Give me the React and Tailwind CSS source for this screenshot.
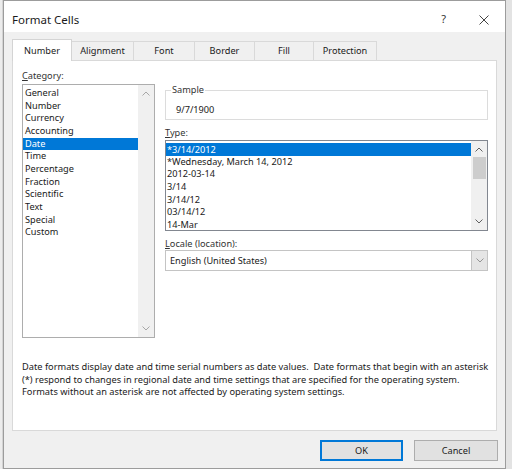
import React from "react";

const Chev = ({ up = false, className = "" }) => (
  <svg width="8" height="5" viewBox="0 0 8 5" className={className}>
    <path
      d={up ? "M0.5 4.5 L4 1 L7.5 4.5" : "M0.5 0.5 L4 4 L7.5 0.5"}
      fill="none"
      stroke="#606060"
      strokeWidth="1"
    />
  </svg>
);

const categories = [
  "General",
  "Number",
  "Currency",
  "Accounting",
  "Date",
  "Time",
  "Percentage",
  "Fraction",
  "Scientific",
  "Text",
  "Special",
  "Custom",
];

const types = [
  "*3/14/2012",
  "*Wednesday, March 14, 2012",
  "2012-03-14",
  "3/14",
  "3/14/12",
  "03/14/12",
  "14-Mar",
];

const tabs = ["Alignment", "Font", "Border", "Fill", "Protection"];
const tabW = [62, 61, 60, 59, 63];

export default function App() {
  return (
    <div className="w-[512px] h-[475px] bg-white flex overflow-hidden font-['Noto_Sans',sans-serif] text-[9.2px] text-[#1a1a1a]">
      <div className="w-[3px] h-[469px] bg-[#ececec] border-r border-[#d4d4d4]" />
      <div className="w-[503px] h-[469px] border border-[#9c9c9c] flex flex-col bg-[#f0f0f0]">
        {/* Title bar */}
        <div className="h-[31px] bg-white flex items-center pl-[8px] pr-[16px]">
          <span className="text-[11.5px] text-[#1a1a1a] mt-[6px]">Format Cells</span>
          <div className="flex-1" />
          <span className="text-[11px] text-[#333] mt-[6px] mr-[33px]">?</span>
          <svg width="10" height="10" viewBox="0 0 10 10" className="mt-[6px]">
            <path d="M0.5 0.5 L9.5 9.5 M9.5 0.5 L0.5 9.5" stroke="#444" strokeWidth="1" />
          </svg>
        </div>

        {/* Body */}
        <div className="flex-1 flex flex-col pl-[8px] pr-[7px] pt-[7px]">
          {/* Tabs */}
          <div className="flex h-[21px] relative z-10">
            <div className="w-[60px] h-[22px] bg-white border border-b-0 border-[#d4d4d4] flex items-center justify-center">
              Number
            </div>
            {tabs.map((t, i) => (
              <div
                key={t}
                style={{ width: tabW[i] }}
                className="h-[19px] mt-[2px] border border-l-0 border-b-0 border-[#d9d9d9] bg-[#f0f0f0] flex items-center justify-center"
              >
                {t}
              </div>
            ))}
          </div>

          {/* Panel */}
          <div className="w-[485px] h-[371px] bg-white border border-[#d9d9d9] flex flex-col pl-[9px] pt-[9px]">
            <div className="flex">
              {/* Left column */}
              <div className="w-[133px] flex flex-col">
                <div className="h-[13px] leading-[12px] text-[#333]">
                  <span className="underline">C</span>ategory:
                </div>
                <div className="mt-[1px] h-[254px] border border-[#adadad] flex">
                  <div className="flex-1 pt-[2px] flex flex-col leading-[12.65px]">
                    {categories.map((c) => (
                      <div
                        key={c}
                        className={
                          c === "Date"
                            ? "bg-[#0078d7] text-white pl-[2px]"
                            : "pl-[2px]"
                        }
                      >
                        {c}
                      </div>
                    ))}
                  </div>
                  <div className="w-[16px] bg-[#f0f0f0] flex flex-col items-center justify-between py-[6px]">
                    <Chev up className="opacity-50" />
                    <Chev className="opacity-50" />
                  </div>
                </div>
              </div>

              {/* Right column */}
              <div className="w-[323px] ml-[10px] flex flex-col pt-[20px]">
                <div className="relative h-[30px] border border-[#dcdcdc] flex items-center pl-[10px] pt-[10px]">
                  <span className="absolute -top-[7px] left-[5px] bg-white px-[1px] leading-[12px] text-[#333]">
                    Sample
                  </span>
                  <span>9/7/1900</span>
                </div>
                <div className="mt-[5px] h-[13px] leading-[15px] text-[#333]">
                  <span className="underline">T</span>ype:
                </div>
                <div className="mt-[2px] h-[91px] border border-[#828790] flex">
                  <div className="flex-1 pt-[2px] flex flex-col leading-[12.65px]">
                    {types.map((t, i) => (
                      <div
                        key={t}
                        className={
                          i === 0
                            ? "bg-[#0078d7] text-white pl-[1px] pt-[1px] leading-[11.65px]"
                            : "pl-[1px]"
                        }
                      >
                        {t}
                      </div>
                    ))}
                  </div>
                  <div className="w-[16px] bg-[#f0f0f0] flex flex-col items-center pt-[6px] pb-[6px]">
                    <Chev up />
                    <div className="mt-[5px] w-[13px] h-[22px] bg-[#cdcdcd]" />
                    <div className="flex-1" />
                    <Chev />
                  </div>
                </div>
                <div className="mt-[5px] h-[13px] leading-[15px] text-[#333]">
                  <span className="underline">L</span>ocale (location):
                </div>
                <div className="mt-[1px] h-[21px] border border-[#c4c4c4] flex">
                  <div className="flex-1 flex items-center pl-[4px]">
                    English (United States)
                  </div>
                  <div className="w-[16px] bg-[#e5e5e5] border-l border-[#c4c4c4] flex items-center justify-center">
                    <Chev className="opacity-60" />
                  </div>
                </div>
              </div>
            </div>

            <div className="mt-[23px] leading-[12.6px] text-[9.25px] text-[#1a1a1a] whitespace-nowrap">
              Date formats display date and time serial numbers as date values.&nbsp; Date formats that begin with an asterisk
              <br />
              (*) respond to changes in regional date and time settings that are specified for the operating system.
              <br />
              Formats without an asterisk are not affected by operating system settings.
            </div>
          </div>

          {/* Buttons */}
          <div className="flex justify-end gap-[11px] mt-[9px]">
            <button className="w-[83px] h-[21px] bg-[#e1e1e1] border border-[#0078d7] outline outline-1 outline-[#0078d7] -outline-offset-2 text-[9.2px] text-[#1a1a1a]">
              OK
            </button>
            <button className="w-[84px] h-[21px] bg-[#e1e1e1] border border-[#adadad] text-[9.2px] text-[#1a1a1a]">
              Cancel
            </button>
          </div>
        </div>
      </div>
      <div className="flex-1 h-[469px] bg-[#e3e3e3]" />
    </div>
  );
}
